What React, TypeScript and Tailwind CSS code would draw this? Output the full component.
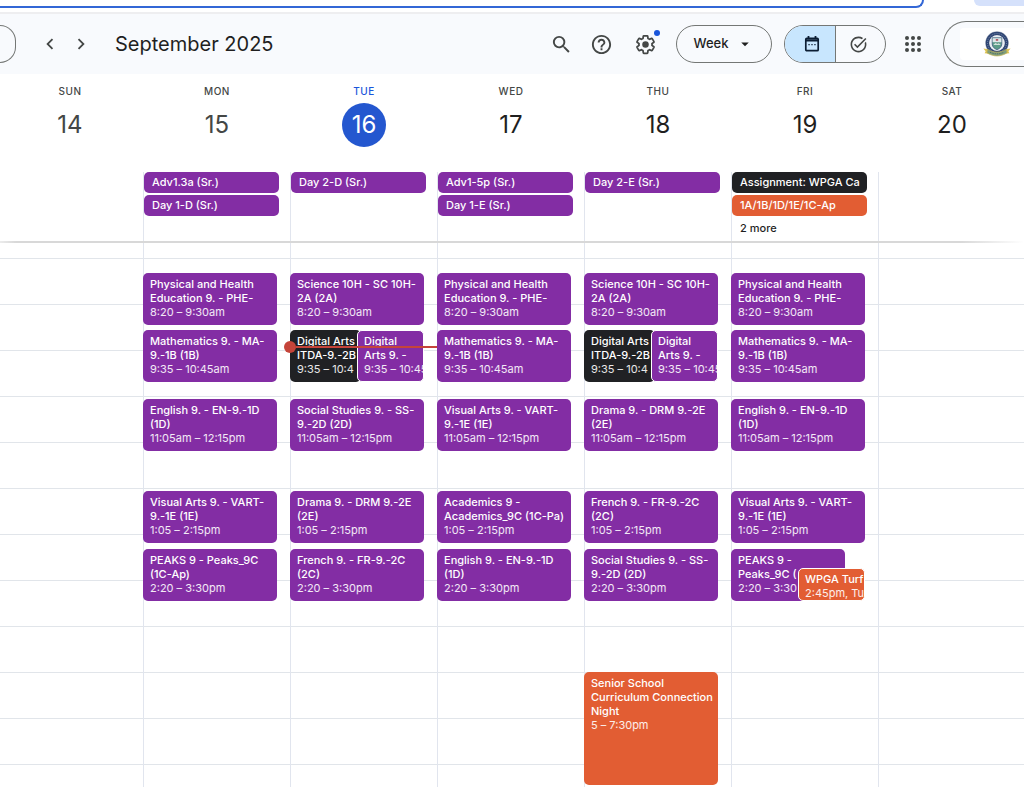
import clsx from 'clsx';
import { MdArrowDropDown, MdChevronLeft, MdChevronRight, MdHelpOutline, MdSearch, MdTaskAlt } from 'react-icons/md';

type T_Color = 'purple' | 'black' | 'orange';

interface I_CalendarEvent {
    title: string;
    time: string;
    start: number; // minutes after midnight
    end: number;
    color?: T_Color;
    left?: number; // fraction of the day column
    width?: number;
    overlay?: boolean;
}

interface I_AllDayEvent {
    title: string;
    color?: T_Color;
}

interface I_Day {
    label: string;
    date: number;
    isPast?: boolean;
    isToday?: boolean;
    allDay: I_AllDayEvent[];
    more?: number;
    events: I_CalendarEvent[];
}

const HOUR_HEIGHT = 46;
const FIRST_HOUR = 8;
const HOURS = Array.from({ length: 14 }, (_, i) => FIRST_HOUR + i);
const NOW = 9 * 60 + 57;

const COLORS: Record<T_Color, string> = {
    purple: 'bg-[#832da4]',
    black: 'bg-[#202124]',
    orange: 'bg-[#e25d33]',
};

const at = (h: number, m: number) => h * 60 + m;

const block1 = (title: string): I_CalendarEvent => ({ title, time: '8:20 – 9:30am', start: at(8, 20), end: at(9, 30) });
const block2 = (title: string): I_CalendarEvent => ({ title, time: '9:35 – 10:45am', start: at(9, 35), end: at(10, 45) });
const block3 = (title: string): I_CalendarEvent => ({ title, time: '11:05am – 12:15pm', start: at(11, 5), end: at(12, 15) });
const block4 = (title: string): I_CalendarEvent => ({ title, time: '1:05 – 2:15pm', start: at(13, 5), end: at(14, 15) });
const block5 = (title: string): I_CalendarEvent => ({ title, time: '2:20 – 3:30pm', start: at(14, 20), end: at(15, 30) });

const digitalArts: I_CalendarEvent[] = [
    { ...block2('Digital Arts\nITDA-9.-2B'), time: '9:35 – 10:4', color: 'black', width: 0.53 },
    { ...block2('Digital\nArts 9. -'), left: 0.5, width: 0.5, overlay: true },
];

const DAYS: I_Day[] = [
    { label: 'Sun', date: 14, isPast: true, allDay: [], events: [] },
    {
        label: 'Mon',
        date: 15,
        isPast: true,
        allDay: [{ title: 'Adv1.3a (Sr.)' }, { title: 'Day 1-D (Sr.)' }],
        events: [
            block1('Physical and Health\nEducation 9. - PHE-'),
            block2('Mathematics 9. - MA-\n9.-1B (1B)'),
            block3('English 9. - EN-9.-1D\n(1D)'),
            block4('Visual Arts 9. - VART-\n9.-1E (1E)'),
            block5('PEAKS 9 - Peaks_9C\n(1C-Ap)'),
        ],
    },
    {
        label: 'Tue',
        date: 16,
        isToday: true,
        allDay: [{ title: 'Day 2-D (Sr.)' }],
        events: [
            block1('Science 10H - SC 10H-\n2A (2A)'),
            ...digitalArts,
            block3('Social Studies 9. - SS-\n9.-2D (2D)'),
            block4('Drama 9. - DRM 9.-2E\n(2E)'),
            block5('French 9. - FR-9.-2C\n(2C)'),
        ],
    },
    {
        label: 'Wed',
        date: 17,
        allDay: [{ title: 'Adv1-5p (Sr.)' }, { title: 'Day 1-E (Sr.)' }],
        events: [
            block1('Physical and Health\nEducation 9. - PHE-'),
            block2('Mathematics 9. - MA-\n9.-1B (1B)'),
            block3('Visual Arts 9. - VART-\n9.-1E (1E)'),
            block4('Academics 9 -\nAcademics_9C (1C-Pa)'),
            block5('English 9. - EN-9.-1D\n(1D)'),
        ],
    },
    {
        label: 'Thu',
        date: 18,
        allDay: [{ title: 'Day 2-E (Sr.)' }],
        events: [
            block1('Science 10H - SC 10H-\n2A (2A)'),
            ...digitalArts,
            block3('Drama 9. - DRM 9.-2E\n(2E)'),
            block4('French 9. - FR-9.-2C\n(2C)'),
            block5('Social Studies 9. - SS-\n9.-2D (2D)'),
            {
                title: 'Senior School\nCurriculum Connection\nNight',
                time: '5 – 7:30pm',
                start: at(17, 0),
                end: at(19, 30),
                color: 'orange',
            },
        ],
    },
    {
        label: 'Fri',
        date: 19,
        allDay: [{ title: 'Assignment: WPGA Ca', color: 'black' }, { title: '1A/1B/1D/1E/1C-Ap', color: 'orange' }],
        more: 2,
        events: [
            block1('Physical and Health\nEducation 9. - PHE-'),
            block2('Mathematics 9. - MA-\n9.-1B (1B)'),
            block3('English 9. - EN-9.-1D\n(1D)'),
            block4('Visual Arts 9. - VART-\n9.-1E (1E)'),
            { ...block5('PEAKS 9 -\nPeaks_9C ('), time: '2:20 – 3:30', width: 0.85 },
            {
                title: 'WPGA Turf',
                time: '2:45pm, Tur',
                start: at(14, 45),
                end: at(15, 30),
                color: 'orange',
                left: 0.5,
                width: 0.5,
                overlay: true,
            },
        ],
    },
    { label: 'Sat', date: 20, allDay: [], events: [] },
];

function SettingsIcon() {
    return (
        <svg viewBox="0 0 24 24" className="size-[21px] overflow-visible" aria-hidden="true">
            <path
                d="M19.43 12.98c.04-.32.07-.64.07-.98 0-.34-.03-.66-.07-.98l2.11-1.65c.19-.15.24-.42.12-.64l-2-3.46c-.09-.16-.26-.25-.44-.25-.06 0-.12.01-.17.03l-2.49 1c-.52-.4-1.08-.73-1.69-.98l-.38-2.65C14.46 2.18 14.25 2 14 2h-4c-.25 0-.46.18-.49.42l-.38 2.65c-.61.25-1.17.59-1.69.98l-2.49-1c-.06-.02-.12-.03-.18-.03-.17 0-.34.09-.43.25l-2 3.46c-.13.22-.07.49.12.64l2.11 1.65c-.04.32-.07.65-.07.98 0 .33.03.66.07.98l-2.11 1.65c-.19.15-.24.42-.12.64l2 3.46c.09.16.26.25.44.25.06 0 .12-.01.17-.03l2.49-1c.52.4 1.08.73 1.69.98l.38 2.65c.03.24.24.42.49.42h4c.25 0 .46-.18.49-.42l.38-2.65c.61-.25 1.17-.59 1.69-.98l2.49 1c.06.02.12.03.18.03.17 0 .34-.09.43-.25l2-3.46c.12-.22.07-.49-.12-.64l-2.11-1.65z"
                fill="none"
                stroke="currentColor"
                strokeWidth="2"
            />
            <circle cx="12" cy="12" r="3.7" fill="currentColor" />
        </svg>
    );
}

function CalendarIcon() {
    return (
        <svg viewBox="0 0 16 18" className="h-[18px] w-4" aria-hidden="true">
            <rect x="1.8" y="3.3" width="12.4" height="12.4" rx="1" fill="none" stroke="currentColor" strokeWidth="1.7" />
            <path d="M1.5 4.2h13v2.2h-13zM3.6 1h1.8v3H3.6zM10.6 1h1.8v3h-1.8z" fill="currentColor" />
            <path d="M4.4 9h1.3v1.3H4.4zM7.35 9h1.3v1.3h-1.3zM10.3 9h1.3v1.3h-1.3z" fill="currentColor" />
        </svg>
    );
}

function AppsIcon() {
    return (
        <svg viewBox="0 0 16 16" className="size-4" aria-hidden="true" fill="currentColor">
            {[2, 8, 14].map(y => [2, 8, 14].map(x => <circle key={`${x}-${y}`} cx={x} cy={y} r="2" />))}
        </svg>
    );
}

function SchoolCrest() {
    return (
        <svg viewBox="0 0 28 26" className="h-[26px] w-7" role="img" aria-label="School crest">
            <path d="M.4 17.6l6 1v4.2l-4.8-.6 1-1.9zM27.6 17.6l-6 1v4.2l4.8-.6-1-1.9z" fill="#e0c452" />
            <circle cx="14" cy="12" r="11.8" fill="#b9bfcc" />
            <circle cx="14" cy="12" r="9.5" fill="none" stroke="#2f4674" strokeWidth="3.6" />
            <circle cx="14" cy="12" r="9.5" fill="none" stroke="#8292b2" strokeWidth=".9" strokeDasharray="1 1.2" />
            <circle cx="14" cy="12" r="7.7" fill="#e9eef2" />
            <path d="M9.2 6.8h9.6V13c0 3-2.3 4.7-4.8 5.7-2.5-1-4.8-2.7-4.8-5.7z" fill="#5c9c88" stroke="#37527c" strokeWidth=".7" />
            <path d="M9.6 7.2h8.8v4H9.6z" fill="#dfe6ea" />
            <path d="M12.8 8h2.4v1.8h-2.4z" fill="#b05560" />
            <path d="M10.6 13.4l2-1.4 1.7 1 1.4-.8 1.7 1.4v.5h-6.8z" fill="#cfe0da" />
            <path d="M4.5 18.2c6 4 13 4 19 0l.6 3.6c-6.5 4.2-13.7 4.2-20.2 0z" fill="#7f9d7c" stroke="#c6b552" strokeWidth=".7" />
            <path d="M7 21.2c4.5 2.2 9.5 2.2 14 0" fill="none" stroke="#46635a" strokeWidth=".8" strokeDasharray="1 .8" />
        </svg>
    );
}

// bottom edge of the window chrome above the page
function BrowserEdge() {
    return (
        <div className="flex h-3.5 shrink-0 items-start border-b-2 border-[#eeeef0] bg-white">
            <div className="-ml-5 h-2 grow rounded-br-2xl border-r-2 border-b-2 border-[#3367d6]" />
            <div className="ml-[50px] h-1.5 w-[50px] rounded-bl-xl bg-[#d5e1fb]" />
        </div>
    );
}

function Toolbar() {
    return (
        <header className="flex h-[60px] shrink-0 items-center bg-[#f8fafd] text-[#444746]">
            <button type="button" aria-label="Today" className="h-[38px] w-4 rounded-r-full border border-l-0 border-[#747775]" />
            <button type="button" aria-label="Previous week" className="ml-[23px] flex size-[22px] items-center justify-center">
                <MdChevronLeft className="size-[22px] shrink-0" />
            </button>
            <button type="button" aria-label="Next week" className="ml-2 flex size-6 items-center justify-center">
                <MdChevronRight className="size-[22px] shrink-0" />
            </button>
            <h1 className="ml-[22px] text-xl text-[#1f1f1f]">September 2025</h1>

            <div className="ml-auto flex items-center">
                <button type="button" aria-label="Search"><MdSearch className="size-[23px]" /></button>
                <button type="button" aria-label="Help" className="ml-[17px]"><MdHelpOutline className="size-[23px]" /></button>
                <button type="button" aria-label="Settings" className="relative ml-[22px]">
                    <SettingsIcon />
                    <span className="absolute -top-1 -right-1 size-1.5 rounded-full bg-[#1a56db]" />
                </button>
                <button
                    type="button"
                    className="ml-5 flex h-[38px] w-24 items-center justify-center gap-2 rounded-full border border-[#747775] text-[13px] font-medium text-[#1f1f1f]"
                >
                    Week
                    <MdArrowDropDown className="size-[18px]" />
                </button>
                <div className="ml-3 flex h-[38px] w-[102px] overflow-hidden rounded-full border border-[#747775]">
                    <button type="button" aria-label="Calendar" className="flex flex-1 items-center justify-center border-r border-[#747775] bg-[#c8e6fe] pl-1 text-[#0b1d33]">
                        <CalendarIcon />
                    </button>
                    <button type="button" aria-label="Tasks" className="flex flex-1 items-center justify-center pr-1">
                        <MdTaskAlt className="size-[19px]" />
                    </button>
                </div>
                <button type="button" aria-label="Apps" className="ml-[19px]"><AppsIcon /></button>
                <button
                    type="button"
                    aria-label="Account"
                    className="ml-[22px] flex h-[46px] w-[81px] items-center rounded-l-full border border-r-0 border-[#747775] pl-4"
                >
                    <span className="flex h-8 grow items-center rounded-l bg-white pl-[23px]"><SchoolCrest /></span>
                </button>
            </div>
        </header>
    );
}

function DayHeading({ day }: { day: I_Day }) {
    return (
        <div className={clsx('flex flex-col items-center pt-[9px] pl-px', day.isToday ? 'text-[#1a56db]' : 'text-[#444746]')}>
            <span className="text-[10px] leading-4 font-medium tracking-wider uppercase">{day.label}</span>
            <span
                className={clsx(
                    'mt-1 flex size-11 items-center justify-center rounded-full text-2xl',
                    day.isToday && 'bg-[#2457cf] text-white',
                    !day.isToday && !day.isPast && 'text-[#1f1f1f]',
                )}
            >
                {day.date}
            </span>
        </div>
    );
}

function AllDayCell({ day, hasRule }: { day: I_Day; hasRule: boolean }) {
    return (
        <div className={clsx('flex h-[69px] flex-col gap-0.5 border-l pr-[11px] text-[11px] leading-[21px] font-medium', hasRule ? 'border-[#e1e5ee]' : 'border-transparent')}>
            {day.allDay.map(event => (
                <button
                    key={event.title}
                    type="button"
                    className={clsx('h-[21px] rounded-[5px] px-2 text-left whitespace-nowrap text-white', COLORS[event.color ?? 'purple'])}
                >
                    {event.title}
                </button>
            ))}
            {day.more && (
                <button type="button" className="h-[21px] px-2 text-left text-[#1f1f1f]">
                    {`${day.more} more`}
                </button>
            )}
        </div>
    );
}

function EventBlock({ event }: { event: I_CalendarEvent }) {
    const { left = 0, width = 1 } = event;
    return (
        <button
            type="button"
            className={clsx(
                'isolate flex flex-col items-start self-start overflow-hidden rounded-[5px] text-left text-[11px] leading-[14px] whitespace-pre text-white [grid-area:1/1]',
                COLORS[event.color ?? 'purple'],
                event.overlay ? 'border border-white px-1.5 pt-[3px]' : 'px-[7px] pt-1',
            )}
            style={{
                marginTop: Math.floor((event.start - FIRST_HOUR * 60) / 60 * HOUR_HEIGHT),
                height: Math.round((event.end - event.start) / 60 * HOUR_HEIGHT) - 2,
                marginLeft: `${left * 100}%`,
                width: `${width * 100}%`,
            }}
        >
            <span className="font-medium">{event.title}</span>
            <span className="text-white/90">{event.time}</span>
        </button>
    );
}

function NowLine() {
    return (
        <div
            className="pointer-events-none isolate -mr-[13px] -ml-1.5 flex items-center self-start [grid-area:1/1]"
            style={{ marginTop: Math.floor((NOW - FIRST_HOUR * 60) / 60 * HOUR_HEIGHT) - 6 }}
        >
            <span className="size-3 rounded-full bg-[#c5443a]" />
            <span className="h-0.5 grow bg-[#c5443a]" />
        </div>
    );
}

export default function App() {
    return (
        <div className="flex h-screen flex-col overflow-hidden bg-white font-[Inter,Roboto,sans-serif]">
            <BrowserEdge />
            <Toolbar />
            <main className="flex min-h-0 grow flex-col">
                <div className="-mr-px -ml-1 grid h-[98px] shrink-0 grid-cols-7">
                    {DAYS.map(day => <DayHeading key={day.label} day={day} />)}
                </div>
                <div className="-mr-px -ml-1 grid shrink-0 grid-cols-7">
                    {DAYS.map((day, i) => <AllDayCell key={day.label} day={day} hasRule={i > 0} />)}
                </div>
                <div className="flex h-0.5 shrink-0">
                    <div className="w-4 bg-linear-to-r from-[#ececec] to-[#d8d8d8]" />
                    <div className="grow bg-[#d8d8d8]" />
                    <div className="w-16 bg-linear-to-r from-[#d8d8d8] to-white" />
                </div>

                {/* Time grid: hour lines and day columns share one cell */}
                <div className="grid min-h-0 grow overflow-hidden">
                    <div className="pt-[15px] [grid-area:1/1]">
                        {HOURS.map(hour => <div key={hour} className="h-[46px] border-t border-[#e1e5ea]" />)}
                    </div>
                    <div className="-mr-px -ml-1 grid grid-cols-7 [grid-area:1/1]">
                        {DAYS.map((day, i) => (
                            <div
                                key={day.label}
                                className={clsx('grid border-l pt-[15px]', i > 0 ? 'border-[#e1e5ee]' : 'border-transparent')}
                            >
                                <div className="-ml-px mr-[13px] grid [grid-area:1/1]">
                                    {day.events.map(event => <EventBlock key={event.title} event={event} />)}
                                    {day.isToday && <NowLine />}
                                </div>
                            </div>
                        ))}
                    </div>
                </div>
            </main>
        </div>
    );
}
